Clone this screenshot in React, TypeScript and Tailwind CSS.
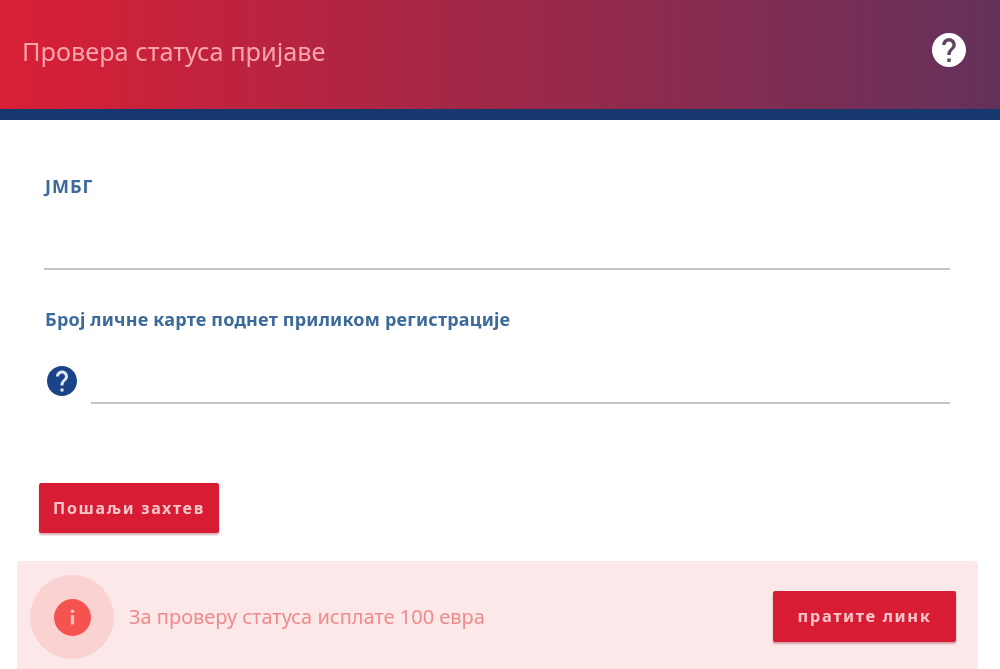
import React from "react";

const font = { fontFamily: '"Noto Sans", sans-serif' };

function Help({ className, mark }: { className: string; mark: string }) {
  return (
    <svg viewBox="2 2 20 20" className={className} aria-hidden="true">
      <circle cx="12" cy="12" r="9" fill={mark} />
      <path
        fill="currentColor"
        d="M12 2C6.48 2 2 6.48 2 12s4.48 10 10 10 10-4.48 10-10S17.52 2 12 2zm1 17h-2v-2h2v2zm2.07-7.75l-.9.92C13.45 12.9 13 13.5 13 15h-2v-.5c0-1.1.45-2.1 1.17-2.83l1.24-1.26c.37-.36.59-.86.59-1.41 0-1.1-.9-2-2-2s-2 .9-2 2H8c0-2.21 1.79-4 4-4s4 1.79 4 4c0 .88-.36 1.68-.93 2.25z"
      />
    </svg>
  );
}

export default function App() {
  return (
    <div className="h-[669px] w-[1000px] overflow-hidden bg-white blur-[0.4px]" style={font}>
      <header className="flex h-[120px] items-center justify-between border-b-[11px] border-[#17386f] bg-linear-to-r/srgb from-[#d91f35] to-[#64315b] pb-[9px] pl-[22px] pr-[34px]">
        <h1 className="mt-[2px] text-[25.3px] font-normal leading-[32px] text-[#fba4ac]">Провера статуса пријаве</h1>
        <Help className="h-[34px] w-[34px] text-white" mark="#5f4560" />
      </header>

      <main className="px-[44px] pt-[55px]">
        <label className="block pl-px text-[18px] font-bold leading-[22px] tracking-[1px] text-[#3c6a9b]">ЈМБГ</label>
        <div className="mt-[71px] h-[2px] w-[906px] bg-[#c4c4c4]" />

        <label className="mt-[38px] block pl-px text-[18px] font-bold leading-[22px] tracking-[0.2px] text-[#3c6a9b]">
          Број личне карте поднет приликом регистрације
        </label>
        <div className="mt-[24px] flex h-[50px] items-end">
          <Help className="mb-[8px] ml-[3px] h-[30px] w-[30px] text-[#1b4488]" mark="#dfe8f3" />
          <div className="ml-[14px] h-[2px] w-[859px] bg-[#c4c4c4]" />
        </div>

        <button className="-ml-[5px] mt-[79px] flex h-[50px] w-[180px] items-center justify-center rounded-[2px] bg-[#d71c33] text-[16px] font-bold tracking-[1.7px] text-[#fbc6ca] shadow-[0_2px_2px_rgba(120,20,40,0.35)]">
          Пошаљи захтев
        </button>
      </main>

      <section className="ml-[17px] mt-[28px] flex h-[120px] w-[961px] items-start rounded-[3px] bg-[#fce8e8] pl-[13px] pr-[22px] pt-[14px]">
        <div className="flex h-[84px] w-[84px] shrink-0 items-center justify-center rounded-full bg-[#fbd2d2]">
          <div className="flex h-[37px] w-[37px] items-center justify-center rounded-full bg-[#f55350]">
            <svg viewBox="0 0 12 20" className="h-[19px] w-[11px]" aria-hidden="true">
              <circle cx="6" cy="3.2" r="2" fill="#fcc5c3" />
              <rect x="4.2" y="7.6" width="3.6" height="10" rx="0.6" fill="#fcc5c3" />
            </svg>
          </div>
        </div>
        <p className="ml-[15px] mt-[30px] text-[20px] leading-6 text-[#ee8b8c]">За проверу статуса исплате 100 евра</p>
        <button className="ml-auto mt-[16px] flex h-[51px] w-[183px] items-center justify-center rounded-[2px] bg-[#d71c33] text-[16.5px] font-bold tracking-[1.6px] text-[#fbc6ca] shadow-[0_2px_2px_rgba(120,20,40,0.35)]">
          пратите линк
        </button>
      </section>
    </div>
  );
}
